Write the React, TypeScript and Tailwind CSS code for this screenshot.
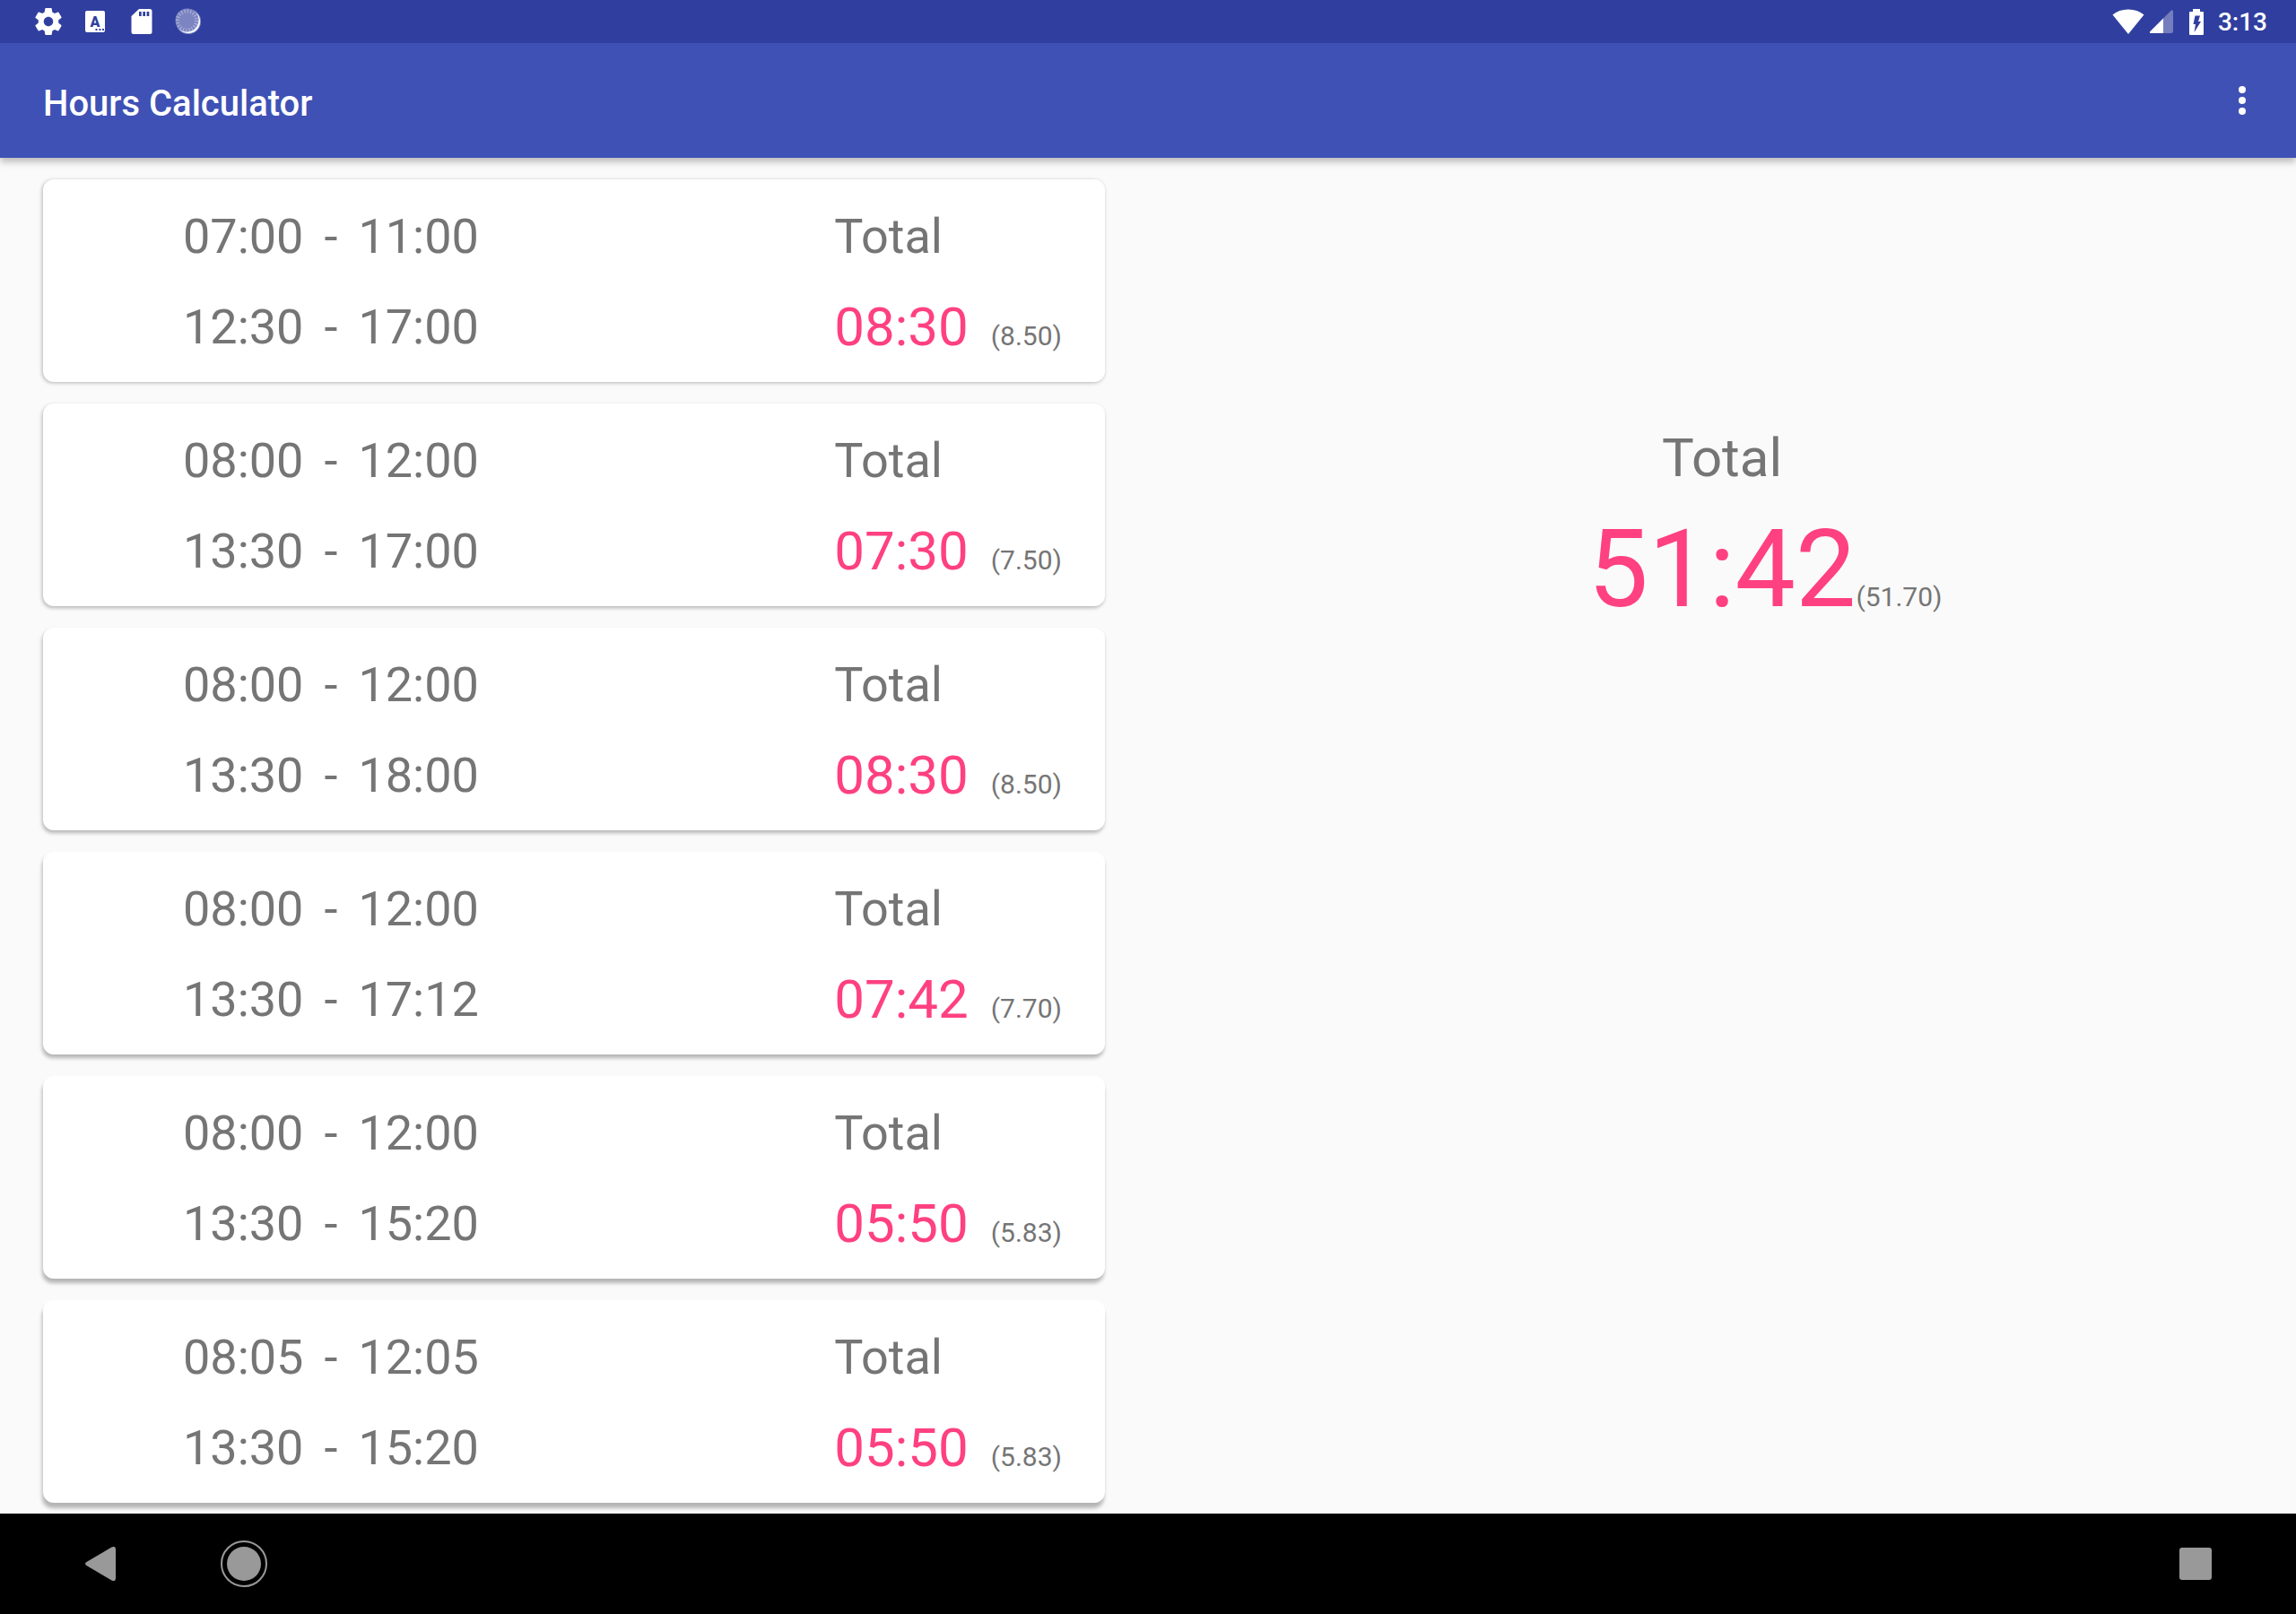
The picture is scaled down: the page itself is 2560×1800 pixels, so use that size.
import React from 'react';

interface Shift {
  start: string;
  end: string;
}

interface WorkDay {
  id: number;
  shifts: Shift[];
  total: string;
  decimal: string;
}

const days: WorkDay[] = [
  { id: 1, shifts: [{ start: '07:00', end: '11:00' }, { start: '12:30', end: '17:00' }], total: '08:30', decimal: '8.50' },
  { id: 2, shifts: [{ start: '08:00', end: '12:00' }, { start: '13:30', end: '17:00' }], total: '07:30', decimal: '7.50' },
  { id: 3, shifts: [{ start: '08:00', end: '12:00' }, { start: '13:30', end: '18:00' }], total: '08:30', decimal: '8.50' },
  { id: 4, shifts: [{ start: '08:00', end: '12:00' }, { start: '13:30', end: '17:12' }], total: '07:42', decimal: '7.70' },
  { id: 5, shifts: [{ start: '08:00', end: '12:00' }, { start: '13:30', end: '15:20' }], total: '05:50', decimal: '5.83' },
  { id: 6, shifts: [{ start: '08:05', end: '12:05' }, { start: '13:30', end: '15:20' }], total: '05:50', decimal: '5.83' },
];

const SettingsIcon = () => (
  <svg viewBox="0 0 24 24" className="h-9 w-9" fill="white">
    <path d="M19.43 12.98c.04-.32.07-.64.07-.98s-.03-.66-.07-.98l2.11-1.65c.19-.15.24-.42.12-.64l-2-3.46c-.12-.22-.39-.3-.61-.22l-2.49 1c-.52-.4-1.08-.73-1.69-.98l-.38-2.65C14.46 2.18 14.25 2 14 2h-4c-.25 0-.46.18-.49.42l-.38 2.65c-.61.25-1.17.59-1.69.98l-2.49-1c-.23-.09-.49 0-.61.22l-2 3.46c-.13.22-.07.49.12.64l2.11 1.65c-.04.32-.07.65-.07.98s.03.66.07.98l-2.11 1.65c-.19.15-.24.42-.12.64l2 3.46c.12.22.39.3.61.22l2.49-1c.52.4 1.08.73 1.69.98l.38 2.65c.03.24.24.42.49.42h4c.25 0 .46-.18.49-.42l.38-2.65c.61-.25 1.17-.59 1.69-.98l2.49 1c.23.09.49 0 .61-.22l2-3.46c.12-.22.07-.49-.12-.64l-2.11-1.65zM12 15.5c-1.93 0-3.5-1.57-3.5-3.5s1.57-3.5 3.5-3.5 3.5 1.57 3.5 3.5-1.57 3.5-3.5 3.5z" />
  </svg>
);

const KeyboardIcon = () => (
  <svg viewBox="0 0 36 36" className="h-9 w-9">
    <rect x="7" y="6" width="22" height="24" rx="2" fill="white" />
    <text x="18" y="24" textAnchor="middle" fontSize="16" fontWeight="900" fill="#303F9F">A</text>
    <path d="M18.5 26h2v2h-2zM22.5 26h2v2h-2zM26 26h2v2h-2z" fill="#303F9F" />
  </svg>
);

const SdCardIcon = () => (
  <svg viewBox="0 0 36 36" className="h-9 w-9">
    <path d="M15 4h12a2.5 2.5 0 0 1 2.5 2.5v23a2.5 2.5 0 0 1-2.5 2.5H9a2.5 2.5 0 0 1-2.5-2.5V12z" fill="white" />
    <path d="M15 7h2.7v5H15zM19.3 7h2.7v5h-2.7zM23.6 7h2.7v5h-2.7z" fill="#303F9F" />
  </svg>
);

const SpinnerIcon = () => (
  <svg viewBox="0 0 36 36" className="h-9 w-9">
    <circle cx="18" cy="18" r="14" fill="#8A91C9" />
    <circle cx="18" cy="18" r="13" fill="white" />
    <circle cx="16.5" cy="16.500" r="13" fill="#7C84C1" />
    <circle cx="16.5" cy="17" r="10.500" fill="none" stroke="#B4B9DD" strokeWidth="4" strokeDasharray="1 2.299" />
  </svg>
);

const WifiIcon = () => (
  <svg viewBox="0 0 36 28" className="h-7 w-9" fill="white">
    <path d="M18 28 .5 6.500C5 2.500 11 .5 18 .5s13 2 17.500 6z" />
  </svg>
);

const SignalIcon = () => (
  <svg viewBox="0 0 26 26" className="h-[26px] w-[26px]" fill="white">
    <path d="M0 24.500 24 .6Q26-.6 26 2v22q0 2-2 2H.8Q-.6 26 0 24.500z" opacity=".33" />
    <path d="M15 9.500V26H.8Q-.6 26 0 24.500z" />
  </svg>
);

const BatteryIcon = () => (
  <svg viewBox="0 0 16 29" className="h-[29px] w-4">
    <path d="M4 0h8v3h3q1 0 1 1v24q0 1-1 1H1q-1 0-1-1V4q0-1 1-1h3z" fill="white" />
    <path d="M6.500 7.500H12l-2 6.500h3L5.500 26l1.500-9H4.500z" fill="#303F9F" />
  </svg>
);

const StatusBar: React.FC = () => (
  <div className="flex h-12 items-center justify-between bg-[#303F9F] pr-8 pl-9">
    <div className="flex items-center gap-4">
      <SettingsIcon />
      <KeyboardIcon />
      <SdCardIcon />
      <SpinnerIcon />
    </div>
    <div className="flex items-center gap-[18px]">
      <div className="flex items-center gap-1.5">
        <WifiIcon />
        <SignalIcon />
      </div>
      <div className="flex items-center gap-4">
        <BatteryIcon />
        <span className="pt-0.5 text-[28px] leading-8 font-medium text-white">3:13</span>
      </div>
    </div>
  </div>
);

const Toolbar: React.FC = () => (
  <div className="flex h-32 items-center justify-between bg-[#3F51B5] pr-9 pl-12">
    <h1 className="pt-2 text-[40px] leading-12 font-medium text-white">Hours Calculator</h1>
    <button type="button" aria-label="More options" className="flex h-12 w-12 items-center justify-center">
      <svg viewBox="0 0 8 32" className="h-8 w-2" fill="white">
        <circle cx="4" cy="4" r="4" />
        <circle cx="4" cy="16" r="4" />
        <circle cx="4" cy="28" r="4" />
      </svg>
    </button>
  </div>
);

const DayCard: React.FC<{ day: WorkDay; depth: number }> = ({ day, depth }) => (
  <li
    className="flex justify-between rounded-xl bg-white pt-8 pr-12 pb-[29px] pl-[156px]"
    // shadows get longer further down the list
    style={{ boxShadow: `-1px ${1 + depth}px 4px rgba(0,0,0,0.28)` }}
  >
    <div className="flex flex-col gap-[37px]">
      {day.shifts.map((shift) => (
        <p key={shift.start} className="flex gap-[23px] text-[54px] leading-16">
          <span>{shift.start}</span>
          <span>-</span>
          <span>{shift.end}</span>
        </p>
      ))}
    </div>
    <div className="flex flex-col gap-[37px]">
      <p className="text-[54px] leading-16">Total</p>
      <p className="flex items-baseline gap-[25px] text-[60px] leading-16">
        <span className="text-[#FF4081]">{day.total}</span>
        <span className="text-[30px] leading-8">({day.decimal})</span>
      </p>
    </div>
  </li>
);

const NavBar: React.FC = () => (
  <nav className="flex h-28 items-center justify-between bg-black px-16">
    <div className="flex items-center gap-16">
      <button type="button" aria-label="Back" className="flex h-24 w-24 items-center justify-center">
        <svg viewBox="0 0 34 38" className="h-[38px] w-[34px]" fill="#999999">
          <path d="M1.500 17 29.500.6Q34-1.500 34 3v32q0 4.500-4.500 2.400L1.500 21q-3-2 0-4z" />
        </svg>
      </button>
      <button type="button" aria-label="Home" className="flex h-24 w-24 items-center justify-center">
        <svg viewBox="0 0 52 52" className="h-13 w-13" fill="#999999">
          <circle cx="26" cy="26" r="19" />
          <circle cx="26" cy="26" r="25" fill="none" stroke="#999999" strokeWidth="2" />
        </svg>
      </button>
    </div>
    <button type="button" aria-label="Recent apps" className="flex h-24 w-24 items-center justify-center">
      <span className="h-9 w-9 rounded-[3px] bg-[#999999]" />
    </button>
  </nav>
);

const App: React.FC = () => {
  return (
    <div className="flex h-screen flex-col bg-[#FAFAFA] font-['Roboto',sans-serif] text-[#757575]">
      <header className="z-10 shadow-[0_4px_8px_rgba(0,0,0,0.28)]">
        <StatusBar />
        <Toolbar />
      </header>
      <main className="grid min-h-0 flex-1 grid-cols-2 overflow-hidden">
        <ul className="flex flex-col gap-6 px-12 pt-6">
          {days.map((day, index) => (
            <DayCard key={day.id} day={day} depth={index} />
          ))}
        </ul>
        <section className="flex flex-col gap-4 pt-[299px]">
          <h2 className="text-center text-[60px] leading-18">Total</h2>
          <p className="grid grid-cols-[1fr_auto_1fr] items-baseline">
            <span className="col-start-2 text-[120px] leading-36 text-[#FF4081]">51:42</span>
            <span className="text-[30px] leading-8">(51.70)</span>
          </p>
        </section>
      </main>
      <NavBar />
    </div>
  );
};

export default App;
